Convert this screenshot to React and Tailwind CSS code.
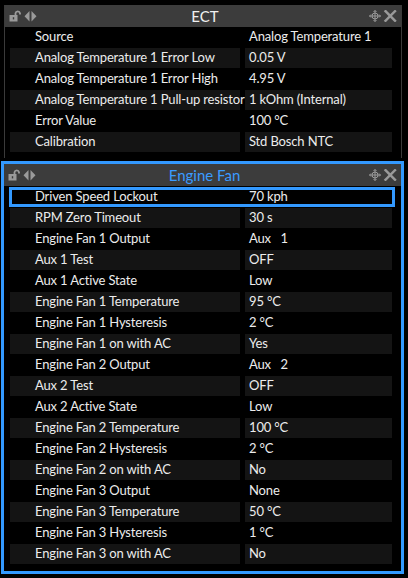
import React from 'react';

const ectRows = [
  ['Source', 'Analog Temperature 1'],
  ['Analog Temperature 1 Error Low', '0.05 V'],
  ['Analog Temperature 1 Error High', '4.95 V'],
  ['Analog Temperature 1 Pull-up resistor', '1 kOhm (Internal)'],
  ['Error Value', '100 °C'],
  ['Calibration', 'Std Bosch NTC'],
];

const fanRows = [
  ['Driven Speed Lockout', '70 kph'],
  ['RPM Zero Timeout', '30 s'],
  ['Engine Fan 1 Output', 'Aux   1'],
  ['Aux 1 Test', 'OFF'],
  ['Aux 1 Active State', 'Low'],
  ['Engine Fan 1 Temperature', '95 °C'],
  ['Engine Fan 1 Hysteresis', '2 °C'],
  ['Engine Fan 1 on with AC', 'Yes'],
  ['Engine Fan 2 Output', 'Aux   2'],
  ['Aux 2 Test', 'OFF'],
  ['Aux 2 Active State', 'Low'],
  ['Engine Fan 2 Temperature', '100 °C'],
  ['Engine Fan 2 Hysteresis', '2 °C'],
  ['Engine Fan 2 on with AC', 'No'],
  ['Engine Fan 3 Output', 'None'],
  ['Engine Fan 3 Temperature', '50 °C'],
  ['Engine Fan 3 Hysteresis', '1 °C'],
  ['Engine Fan 3 on with AC', 'No'],
];

function LeftIcons() {
  return (
    <svg width="32" height="12" viewBox="0 0 32 12" className="shrink-0">
      {/* open padlock */}
      <path d="M6.5 5 V3.2 A2.3 2.3 0 0 1 11 3.2 V4.5" fill="none" stroke="#9a9a9a" strokeWidth="1.8" />
      <rect x="0.5" y="5" width="8" height="6.5" fill="#9a9a9a" />
      <rect x="3.8" y="7.2" width="1.4" height="2.2" fill="#3c3c3c" />
      {/* arrows */}
      <polygon points="20.5,1 20.5,11.5 15.5,6.25" fill="#9a9a9a" />
      <polygon points="22.5,1 22.5,11.5 27.5,6.25" fill="#9a9a9a" />
    </svg>
  );
}

function RightIcons() {
  return (
    <svg width="28" height="12" viewBox="0 0 28 12" className="shrink-0">
      {/* move */}
      <g stroke="#9a9a9a" strokeWidth="1" fill="none">
        <circle cx="6" cy="6" r="3" />
        <line x1="6" y1="0.5" x2="6" y2="11.5" />
        <line x1="0.5" y1="6" x2="11.5" y2="6" />
        <polyline points="4.5,2 6,0.5 7.5,2" />
        <polyline points="4.5,10 6,11.5 7.5,10" />
        <polyline points="2,4.5 0.5,6 2,7.5" />
        <polyline points="10,4.5 11.5,6 10,7.5" />
      </g>
      {/* close */}
      <g stroke="#9a9a9a" strokeWidth="2.4" strokeLinecap="square">
        <line x1="16.5" y1="1.2" x2="26" y2="10.8" />
        <line x1="26" y1="1.2" x2="16.5" y2="10.8" />
      </g>
    </svg>
  );
}

function Header({ title, active }) {
  return (
    <div className="flex items-center h-[22px] bg-[#3c3c3c] pl-[4px] pr-[4px]">
      <LeftIcons />
      <div
        className={
          active
            ? 'flex-1 text-center text-[15px] leading-none text-[#3a9bff]'
            : 'flex-1 text-center text-[15px] leading-none text-[#f0f0f0]'
        }
      >
        {title}
      </div>
      <RightIcons />
    </div>
  );
}

function Row({ label, value, alt, selected, offset }) {
  const cell = alt ? 'bg-[#141414]' : 'bg-black';
  return (
    <div className="relative flex h-[21px] text-[13px] tracking-[-0.15px] text-[#ececec]">
      <div className={`${offset} w-[230px] h-[20px] pl-[25px] flex items-center whitespace-nowrap ${cell}`}>
        {label}
      </div>
      <div className={`ml-[5px] w-[147px] h-[20px] pl-[4px] flex items-center whitespace-pre ${cell}`}>
        {value}
      </div>
      {selected && (
        <div className="absolute left-[5px] top-0 w-[386px] h-[20px] border-[3px] border-[#3399ff]" />
      )}
    </div>
  );
}

export default function App() {
  return (
    <div className="w-[408px] h-[578px] bg-black overflow-hidden font-['Lato',sans-serif]">
      <div className="pt-[5px] pl-[4px] w-[402px]">
        <div className="h-[153px] border-x border-[#3a3a3a]">
          <Header title="ECT" />
          {ectRows.map(([l, v], i) => (
            <Row key={l} label={l} value={v} alt={i % 2 === 1} offset="ml-[5px]" />
          ))}
        </div>
      </div>
      <div className="mt-[3px] ml-[1px] w-[403px] h-[413px] border-[3px] border-[#3399ff]">
        <Header title="Engine Fan" active />
        <div className="pt-px">
          {fanRows.map(([l, v], i) => (
            <Row key={l} label={l} value={v} alt={i % 2 === 1} selected={i === 0} offset="ml-[6px]" />
          ))}
        </div>
      </div>
    </div>
  );
}
